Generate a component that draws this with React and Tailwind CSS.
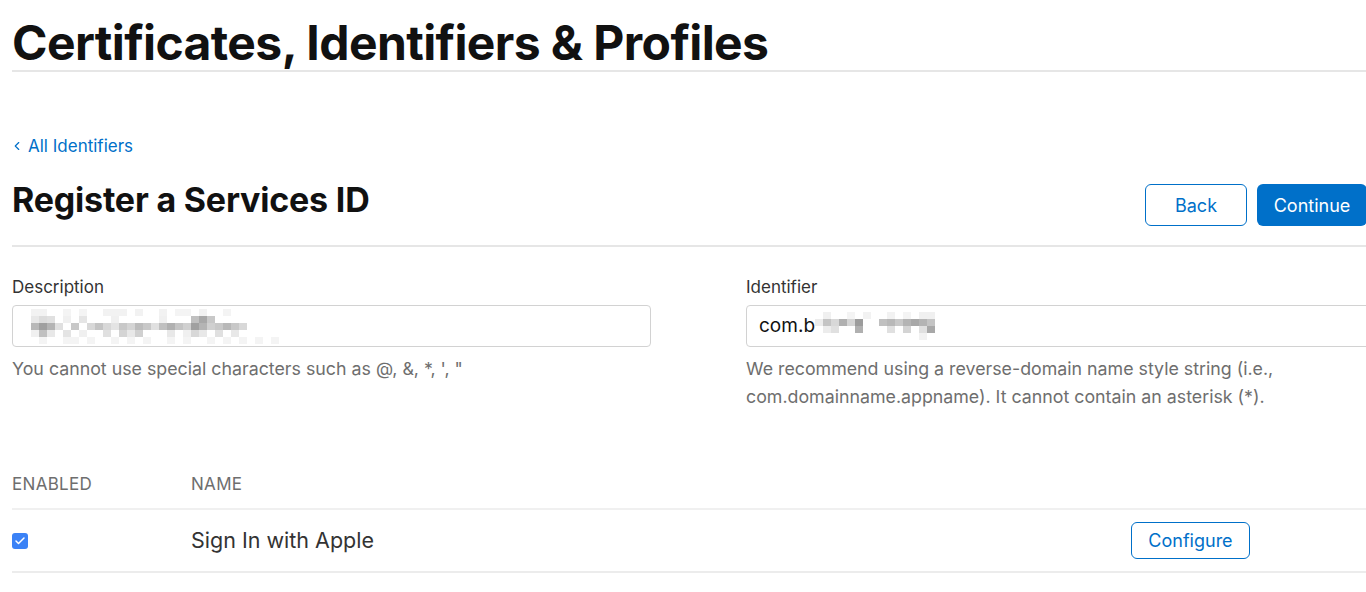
import { Check, ChevronLeft } from "lucide-react";

const font = { fontFamily: "Inter, 'Noto Sans', sans-serif" };

// pixelated stand-in for the blurred text in the inputs
function Pixels({ cells }) {
  return (
    <div className="flex flex-col">
      {cells.map((row, i) => (
        <div key={i} className="flex">
          {row.map((c, j) => (
            <div key={j} className="w-[8px] h-[7px]" style={{ background: c }} />
          ))}
        </div>
      ))}
    </div>
  );
}

const descPixels = [
  ["#fff", "#f2f2f2", "#f2f2f2", "#fff", "#fff", "#f4f4f4", "#fff", "#f4f4f4", "#fff", "#fff", "#f2f2f2", "#f2f2f2", "#f2f2f2", "#fff", "#f2f2f2", "#fff", "#fff", "#f2f2f2", "#fff", "#f4f4f4", "#f4f4f4", "#fff", "#f2f2f2", "#fff", "#fff", "#f4f4f4", "#fff", "#fff", "#fff", "#fff", "#fff", "#fff", "#fff", "#fff"],
  ["#fff", "#e8e8e8", "#dcdcdc", "#e0e0e0", "#fff", "#f0f0f0", "#fff", "#e5e5e5", "#fff", "#fff", "#fff", "#f0f0f0", "#fff", "#fff", "#fff", "#fff", "#fff", "#f0f0f0", "#fff", "#fff", "#fff", "#c0c0c0", "#a8a8a8", "#c8c8c8", "#fff", "#fff", "#fff", "#fff", "#fff", "#fff", "#fff", "#fff", "#fff", "#fff"],
  ["#fff", "#b8b8b8", "#a0a0a0", "#b4b4b4", "#e0e0e0", "#fff", "#c8c8c8", "#fff", "#d8d8d8", "#c4c4c4", "#d8d8d8", "#e4e4e4", "#c8c8c8", "#d4d4d4", "#bcbcbc", "#c8c8c8", "#e0e0e0", "#c0c0c0", "#b0b0b0", "#c4c4c4", "#d0d0d0", "#a0a0a0", "#b4b4b4", "#d0d0d0", "#c8c8c8", "#b8b8b8", "#c8c8c8", "#d8d8d8", "#fff", "#fff", "#fff", "#fff", "#fff", "#fff"],
  ["#fff", "#f0f0f0", "#c0c0c0", "#e8e8e8", "#fff", "#e4e4e4", "#fff", "#f0f0f0", "#fff", "#fff", "#e0e0e0", "#fff", "#d4d4d4", "#e8e8e8", "#d0d0d0", "#fff", "#fff", "#fff", "#e8e8e8", "#fff", "#f0f0f0", "#d8d8d8", "#e8e8e8", "#fff", "#e0e0e0", "#fff", "#e8e8e8", "#fff", "#fff", "#fff", "#fff", "#fff", "#fff", "#fff"],
  ["#fff", "#fff", "#f4f4f4", "#fff", "#fff", "#f4f4f4", "#f4f4f4", "#fff", "#f4f4f4", "#fff", "#fff", "#f4f4f4", "#fff", "#f4f4f4", "#fff", "#f4f4f4", "#fff", "#fff", "#f4f4f4", "#fff", "#f4f4f4", "#fff", "#fff", "#f4f4f4", "#fff", "#f4f4f4", "#fff", "#f4f4f4", "#fff", "#f4f4f4", "#fff", "#f4f4f4", "#fff", "#fff"],
];

const idPixels = [
  ["#fff", "#f0f0f0", "#fff", "#fff", "#f4f4f4", "#fff", "#f2f2f2", "#fff", "#fff", "#f2f2f2", "#fff", "#f4f4f4", "#fff", "#f0f0f0", "#f0f0f0", "#fff", "#fff", "#fff", "#fff", "#fff", "#fff", "#fff", "#fff", "#fff", "#fff", "#fff", "#fff", "#fff", "#fff", "#fff", "#fff", "#fff"],
  ["#ececec", "#c4c4c4", "#d8d8d8", "#b0b0b0", "#d4d4d4", "#9c9c9c", "#fff", "#fff", "#c0c0c0", "#b8b8b8", "#c8c8c8", "#b4b4b4", "#a8a8a8", "#b4b4b4", "#c4c4c4", "#fff", "#fff", "#fff", "#fff", "#fff", "#fff", "#fff", "#fff", "#fff", "#fff", "#fff", "#fff", "#fff", "#fff", "#fff", "#fff", "#fff"],
  ["#fff", "#ececec", "#e0e0e0", "#fff", "#fff", "#b0b0b0", "#fff", "#fff", "#fff", "#e0e0e0", "#fff", "#d4d4d4", "#fff", "#e0e0e0", "#a8a8a8", "#fff", "#fff", "#fff", "#fff", "#fff", "#fff", "#fff", "#fff", "#fff", "#fff", "#fff", "#fff", "#fff", "#fff", "#fff", "#fff", "#fff"],
  ["#fff", "#fff", "#fff", "#fff", "#fff", "#fff", "#fff", "#fff", "#fff", "#fff", "#fff", "#fff", "#fff", "#f2f2f2", "#fff", "#fff", "#fff", "#fff", "#fff", "#fff", "#fff", "#fff", "#fff", "#fff", "#fff", "#fff", "#fff", "#fff", "#fff", "#fff", "#fff", "#fff"],
];

export default function App() {
  return (
    <div className="w-[1366px] h-[592px] overflow-hidden bg-white text-[#333]" style={font}>
      <div className="ml-3 w-[1378px]">
        <h1 className="pt-[19px] text-[48px] leading-[48px] font-bold tracking-[-0.6px] text-[#111]">
          Certificates, Identifiers &amp; Profiles
        </h1>
        <div className="mt-[3px] h-[2px] bg-[#e6e6e6]" />

        <a className="mt-[63px] flex items-center gap-[4px] text-[17px] leading-[22px] text-[#0070c9]">
          <ChevronLeft size={14} strokeWidth={2} className="-ml-[2px]" />
          All Identifiers
        </a>

        <div className="mt-[17px] flex items-center justify-between pr-[23px]">
          <h2 className="text-[34px] leading-[40px] font-bold text-[#111] tracking-[-0.2px]">
            Register a Services ID
          </h2>
          <div className="flex gap-[10px] mt-[10px]">
            <button className="w-[102px] h-[42px] rounded-[6px] border border-[#0070c9] text-[18px] text-[#0070c9]">
              Back
            </button>
            <button className="w-[110px] h-[42px] rounded-[6px] bg-[#0070c9] text-[18px] text-white">
              Continue
            </button>
          </div>
        </div>
        <div className="mt-[19px] h-[2px] bg-[#e6e6e6]" />

        <div className="mt-[29px] flex gap-[95px]">
          <div className="w-[645px]">
            <label className="block text-[17px] leading-[22px] text-[#333]">Description</label>
            <div className="mt-[7px] h-[42px] rounded-[4px] border border-[#d2d2d2] flex items-center pl-[10px]">
              <Pixels cells={descPixels} />
            </div>
            <p className="mt-[8px] text-[17.8px] leading-[28px] text-[#6e6e6e]">
              You cannot use special characters such as @, &amp;, *, ', "
            </p>
          </div>
          <div className="w-[650px]">
            <label className="block text-[17px] leading-[22px] text-[#333]">Identifier</label>
            <div className="mt-[7px] h-[42px] rounded-[4px] border border-[#d2d2d2] flex items-center pl-[12px]">
              <span className="text-[19px] text-[#111]">com.b</span>
              <Pixels cells={idPixels} />
            </div>
            <p className="mt-[8px] text-[17.8px] leading-[28px] text-[#6e6e6e]">
              We recommend using a reverse-domain name style string (i.e.,
              <br />
              com.domainname.appname). It cannot contain an asterisk (*).
            </p>
          </div>
        </div>

        <div className="mt-[51px] w-[1355px]">
          <div className="flex h-[46px] items-center text-[17px] uppercase text-[#6e6e6e] tracking-[0.3px]">
            <div className="w-[179px]">Enabled</div>
            <div>Name</div>
          </div>
          <div className="h-[2px] bg-[#f0f0f0]" />
          <div className="flex h-[61px] items-center">
            <div className="w-[179px]">
              <div className="w-[16px] h-[16px] rounded-[3px] bg-[#3b82f6] flex items-center justify-center">
                <Check size={12} strokeWidth={3} color="white" />
              </div>
            </div>
            <div className="flex-1 text-[21.5px] text-[#333]">Sign In with Apple</div>
            <button className="mr-[117px] w-[119px] h-[37px] rounded-[6px] border border-[#0070c9] text-[18px] text-[#0070c9]">
              Configure
            </button>
          </div>
          <div className="h-[2px] bg-[#ececec]" />
        </div>
      </div>
    </div>
  );
}
